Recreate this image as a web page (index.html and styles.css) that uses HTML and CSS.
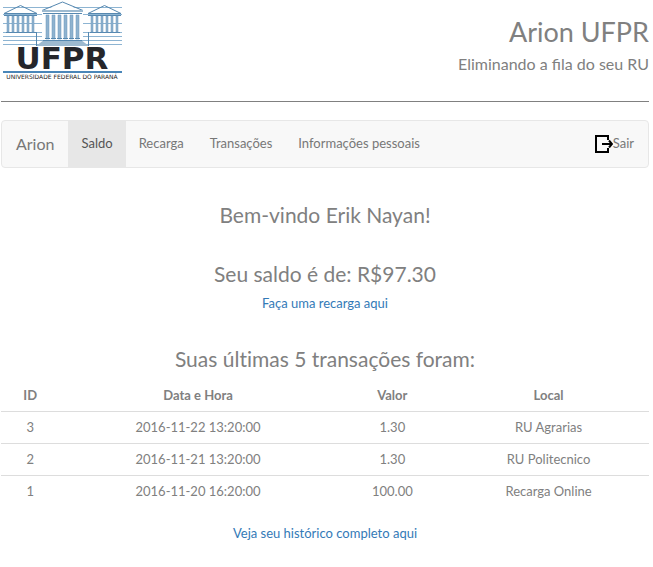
FILE: index.html
```html
<!DOCTYPE html>
<html lang="pt-BR">
<head>
<meta charset="utf-8">
<title>Arion UFPR</title>
<meta name="viewport" content="width=device-width, initial-scale=1">
<link rel="stylesheet" href="styles.css">
</head>
<body>
<header class="masthead">
  <svg class="logo" width="124" height="82" viewBox="0 0 124 82" role="img" aria-label="UFPR">
    <defs>
      <g id="wing">
        <path class="line" d="M4 13.500 20.500 5.500 37 13.500zM4 15.500H37M6 32.500H36"/>
        <path class="column" d="M7 16h2v16h-2zM12 16h2v16h-2zM17 16h2v16h-2zM22 16h2v16h-2zM27 16h2v16h-2zM32 16h2v16h-2z"/>
      </g>
    </defs>
    <path class="rule" d="M3 7.500H122M3 14.500H122M3 23.500H122M3 32.500H122M3 36.500H122M3 40.500H122M3 44.500H122"/>
    <path class="shade" d="M36 46 44 40H81L89 46z"/>
    <use href="#wing"/>
    <use href="#wing" x="84"/>
    <path class="front" d="M42 12 62.500 2 83 12V40H42z"/>
    <path class="line" d="M42 10.500 62.500 2 83 10.500zM43 13.500H82M36.500 32V46M88.500 32V46M43 40.500H82"/>
    <path class="shade" d="M42 10h41v2h-41z"/>
    <path class="column" d="M46 15h3v24h-3zM52 15h3v24h-3zM58 15h3v24h-3zM64 15h3v24h-3zM70 15h3v24h-3zM76 15h3v24h-3z"/>
    <path class="line" d="M45 38.500h5M51 38.500h5M57 38.500h5M63 38.500h5M69 38.500h5M75 38.500h5"/>
    <text class="wordmark" x="62" y="69" text-anchor="middle">UFPR</text>
    <path class="bar" d="M3 72H122"/>
    <text class="motto" x="62" y="79" text-anchor="middle">UNIVERSIDADE FEDERAL DO PARANÁ</text>
  </svg>
  <div class="titles">
    <h1>Arion UFPR</h1>
    <p>Eliminando a fila do seu RU</p>
  </div>
</header>
<nav class="navbar">
  <a class="brand" href="#">Arion</a>
  <a class="tab active" href="#" aria-current="page">Saldo</a>
  <a class="tab" href="#">Recarga</a>
  <a class="tab" href="#">Transações</a>
  <a class="tab" href="#">Informações pessoais</a>
  <a class="tab exit" href="#"><svg width="18" height="19" viewBox="0 -1 18 19" aria-hidden="true"><path d="M13 5V1H1v16h12v-4M7 9h9" fill="none" stroke="#000" stroke-width="2"/><path d="M14 5.500 17 9l-3 3.500" fill="none" stroke="#000" stroke-width="2"/></svg>Sair</a>
</nav>
<main>
  <h2>Bem-vindo Erik Nayan!</h2>
  <section>
    <h2>Seu saldo é de: R$97.30</h2>
    <a href="#">Faça uma recarga aqui</a>
  </section>
  <section>
    <h2>Suas últimas 5 transações foram:</h2>
    <table>
      <thead><tr><th>ID</th><th>Data e Hora</th><th>Valor</th><th>Local</th></tr></thead>
      <tbody>
        <tr><td>3</td><td>2016-11-22 13:20:00</td><td>1.30</td><td>RU Agrarias</td></tr>
        <tr><td>2</td><td>2016-11-21 13:20:00</td><td>1.30</td><td>RU Politecnico</td></tr>
        <tr><td>1</td><td>2016-11-20 16:20:00</td><td>100.00</td><td>Recarga Online</td></tr>
      </tbody>
    </table>
    <a href="#">Veja seu histórico completo aqui</a>
  </section>
</main>
</body>
</html>
```
FILE: styles.css
```css
* { box-sizing: border-box; }
body {
  margin: 0 4px 0 1px;
  font: 13px/18px Lato, sans-serif;
  color: #808080;
  background: #fff;
}
h1, h2, p { margin: 0; font-weight: 400; }
a { color: #337ab7; text-decoration: none; }

.masthead {
  display: flex;
  justify-content: space-between;
  height: 102px;
  margin-bottom: 18px;
  border-bottom: 1px solid #808080;
}
.logo { display: block; margin-left: -1px; }
.titles { padding-top: 16px; text-align: right; }
h1 { font-size: 27px; line-height: 32px; }
.titles p { margin-top: 6px; font-size: 16px; line-height: 20px; }

.line { fill: none; stroke: #5688b0; }
.rule { fill: none; stroke: #8db4d2; }
.column { fill: #8fb3cf; stroke: #6894b8; stroke-width: .5; }
.shade { fill: #9dbad0; }
.front { fill: #fff; }
.bar { stroke: #4a86b8; stroke-width: 2; }
.wordmark {
  font: bold 31px "DejaVu Sans", sans-serif;
  fill: #25262b;
}
.motto { font: 6px "DejaVu Sans", sans-serif; fill: #222; }

.navbar {
  display: flex;
  padding-right: 1px;
  border: 1px solid #e7e7e7;
  border-radius: 4px;
  background: #f8f8f8;
}
.brand { padding: 14px; font-size: 16px; color: #777; }
.tab { padding: 13px 13px 14px; color: #777; }
.active { color: #555; background: #e7e7e7; }
.exit { display: flex; margin-left: auto; }

main { text-align: center; }
h2 { font-size: 21px; line-height: 24px; font-variant-ligatures: none; }
main > h2 { margin-top: 35px; }
section { margin-top: 35px; }
section h2 { margin-bottom: 8px; }
table { width: 100%; margin-bottom: 17px; border-collapse: collapse; }
th { padding: 7px 8px; }
td { padding: 6px 8px 7px; border-top: 1px solid #ddd; }
```
